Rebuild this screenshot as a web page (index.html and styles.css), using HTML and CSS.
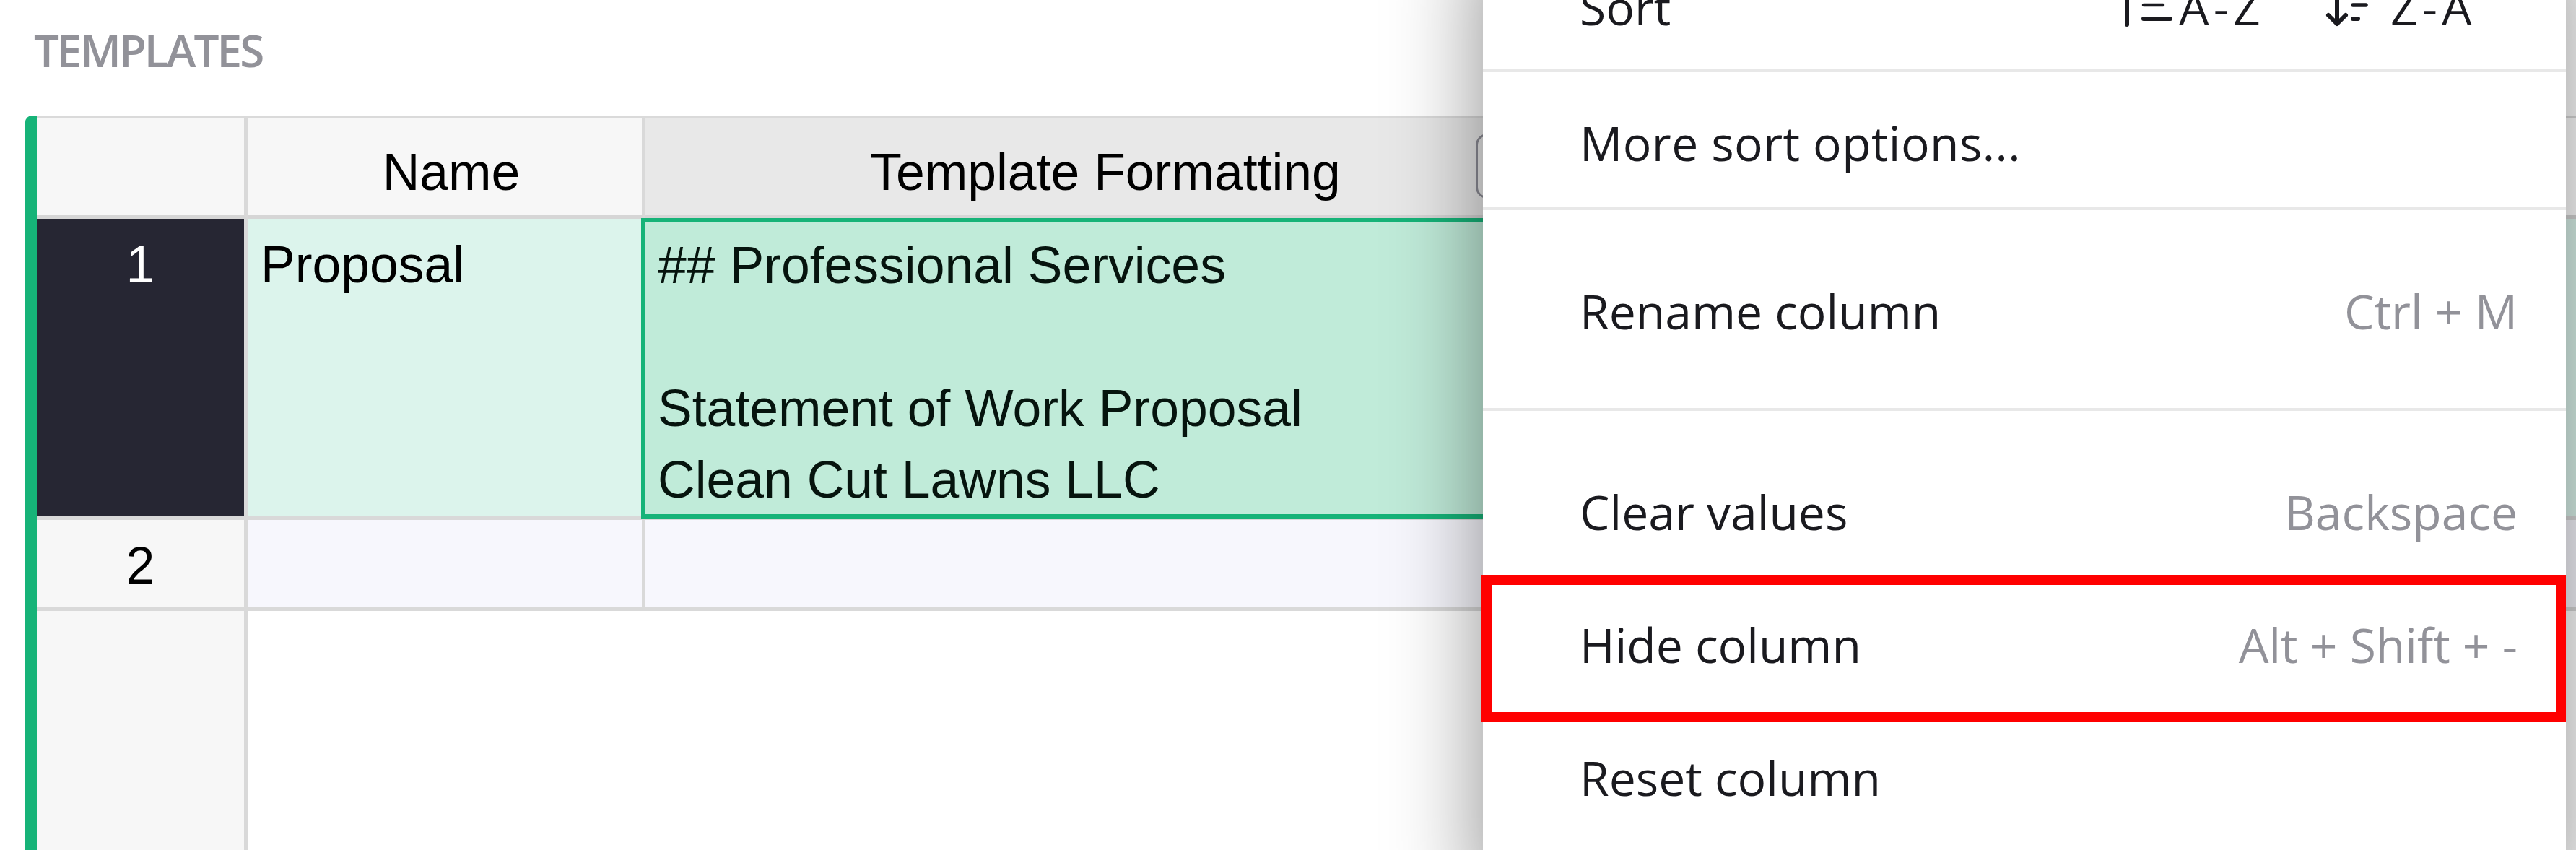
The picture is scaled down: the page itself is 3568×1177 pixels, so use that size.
FILE: index.html
```html
<!DOCTYPE html>
<html lang="en">
<head>
<meta charset="utf-8">
<title>Templates</title>
<link rel="stylesheet" href="styles.css">
</head>
<body>
<div class="page">
  <div class="section-title">TEMPLATES</div>
  <div class="section">
    <div class="active-bar"></div>
    <div class="grid">
      <div class="cell hdr rownum"></div>
      <div class="cell hdr col-name"><span class="hdr-label">Name</span></div>
      <div class="cell hdr col-tf selected-col"><span class="hdr-label">Template Formatting</span><span class="hdr-btn"><svg viewBox="0 0 20 20" width="40" height="40"><path d="M5 8l5 5 5-5" fill="none" stroke="#8d8d96" stroke-width="2"/></svg></span></div>
      <div class="cell hdr col-rest"></div>

      <div class="cell rownum active-row">1</div>
      <div class="cell col-name row-sel">Proposal</div>
      <div class="cell col-tf cursor-cell">## Professional Services

Statement of Work Proposal
Clean Cut Lawns LLC</div>
      <div class="cell col-rest row-sel"></div>

      <div class="cell rownum">2</div>
      <div class="cell col-name new-row"></div>
      <div class="cell col-tf new-row"></div>
      <div class="cell col-rest new-row"></div>

      <div class="cell rownum filler"></div>
      <div class="filler-rest"></div>
    </div>
  </div>

  <div class="menu">
    <div class="menu-item sort-item">
      <span>Sort</span>
      <span class="sort-group">
        <svg class="sort-icon asc" width="80" height="90" viewBox="0 0 80 90">
          <path d="M1 14 L11 3 L21 14" fill="none" stroke="#1a1a1f" stroke-width="6" stroke-linecap="round" stroke-linejoin="round"/>
          <line x1="11" y1="4" x2="11" y2="70" stroke="#1a1a1f" stroke-width="6" stroke-linecap="round"/>
          <line x1="34" y1="23" x2="52" y2="23" stroke="#1a1a1f" stroke-width="5" stroke-linecap="round"/>
          <line x1="34" y1="43" x2="61" y2="43" stroke="#1a1a1f" stroke-width="4.5" stroke-linecap="round"/>
          <line x1="34" y1="62" x2="71" y2="62" stroke="#1a1a1f" stroke-width="6" stroke-linecap="round"/>
        </svg>
        <span class="sort-label">A-Z</span>
        <svg class="sort-icon desc" width="66" height="90" viewBox="0 0 66 90">
          <line x1="17" y1="0" x2="17" y2="69" stroke="#1a1a1f" stroke-width="6" stroke-linecap="round"/>
          <path d="M5 57 L17 69 L29 57" fill="none" stroke="#1a1a1f" stroke-width="6" stroke-linecap="round" stroke-linejoin="round"/>
          <line x1="39" y1="24" x2="62" y2="24" stroke="#1a1a1f" stroke-width="5" stroke-linecap="round"/>
          <line x1="39" y1="43" x2="57" y2="43" stroke="#1a1a1f" stroke-width="5.5" stroke-linecap="round"/>
          <line x1="39" y1="62" x2="46" y2="62" stroke="#1a1a1f" stroke-width="6" stroke-linecap="round"/>
        </svg>
        <span class="sort-label">Z-A</span>
      </span>
    </div>
    <div class="menu-sep"></div>
    <div class="menu-item more-sort">More sort options...</div>
    <div class="menu-sep"></div>
    <div class="menu-section">
      <div class="menu-item"><span>Rename column</span><span class="shortcut">Ctrl + M</span></div>
    </div>
    <div class="menu-sep"></div>
    <div class="menu-section">
      <div class="menu-item"><span>Clear values</span><span class="shortcut">Backspace</span></div>
      <div class="menu-item"><span>Hide column</span><span class="shortcut">Alt + Shift + -</span></div>
      <div class="menu-item"><span>Reset column</span></div>
    </div>
    <div class="annotation"></div>
  </div>
</div>
</body>
</html>
```

FILE: styles.css
```css
html, body {
  margin: 0;
  padding: 0;
  height: 100%;
  overflow: hidden;
  background: #ffffff;
}

.page {
  position: relative;
  width: 3568px;
  height: 1177px;
  overflow: hidden;
  font-family: "Liberation Sans", Arial, sans-serif;
  color: #000000;
}

.section-title {
  padding: 29px 0 0 47px;
  height: 80px;
  font-family: "Open Sans", "Noto Sans", sans-serif;
  font-weight: 600;
  font-size: 62px;
  line-height: 80px;
  letter-spacing: -3px;
  color: #929299;
}

.section {
  display: flex;
  margin-top: 51px;
  padding-left: 35px;
  height: 1017px;
}

.active-bar {
  width: 16px;
  flex: none;
  background: #16b378;
  border-radius: 9px 0 0 0;
}

.grid {
  flex: 1;
  display: grid;
  grid-template-columns: 292px 550px 1262px 1fr;
  grid-template-rows: 139px 417px 126px 1fr;
  border-top: 4px solid #dadada;
}

.cell {
  box-sizing: border-box;
  font-size: 71.5px;
  line-height: 99px;
  border-bottom: 5px solid #d9d9d9;
  white-space: pre-wrap;
  overflow: hidden;
}

.hdr {
  display: flex;
  align-items: center;
  justify-content: center;
  padding: 6px 0 0 0;
  white-space: nowrap;
  background: #f7f7f7;
  border-bottom-color: #d6d6d6;
}

.hdr-label {
  display: block;
}

.hdr.selected-col {
  background: #e8e8e8;
  position: relative;
  overflow: visible;
}

.hdr.col-rest {
  background: #ffffff;
}

.hdr-btn {
  position: absolute;
  left: 1151px;
  top: 21px;
  width: 90px;
  height: 90px;
  box-sizing: border-box;
  border: 3px solid #8d8d96;
  border-radius: 16px;
  display: flex;
  align-items: center;
  justify-content: center;
}

.rownum {
  border-right: 5px solid #d9d9d9;
  background: #f7f7f7;
  text-align: center;
  padding-top: 14px;
}

.rownum.active-row {
  background: #262633;
  color: #ffffff;
}

.rownum.filler {
  border-bottom: none;
}

.col-name {
  border-right: 4px solid #d9d9d9;
  padding: 14px 0 0 18px;
}

.col-tf {
  border-right: 4px solid #d9d9d9;
  padding: 15px 0 0 18px;
}

.row-sel {
  background: #dcf4ec;
}

.new-row {
  background: #f7f7fd;
}

.cursor-cell {
  position: relative;
  overflow: visible;
  background: #c0ebd9;
  color: #06140e;
}

.cursor-cell::after {
  content: "";
  position: absolute;
  top: -1px;
  left: -5px;
  right: -4px;
  bottom: -3px;
  border: 6px solid #16b378;
  pointer-events: none;
}

.filler-rest {
  grid-column: 2 / 5;
  background: #ffffff;
}

/* Column menu */
.menu {
  position: absolute;
  left: 2054px;
  top: -83px;
  width: 1500px;
  background: #ffffff;
  box-shadow: 0 0 120px rgba(0, 0, 0, 0.45);
  font-family: "Open Sans", "Noto Sans", sans-serif;
  font-size: 66px;
  color: #1a1a1f;
  padding-bottom: 47px;
}

.menu-item {
  box-sizing: border-box;
  height: 184px;
  display: flex;
  align-items: center;
  padding: 0 67px 0 134px;
  white-space: nowrap;
}

.sort-item {
  height: 179px;
  padding-top: 5px;
}

.more-sort {
  height: 187px;
  padding-top: 6px;
  letter-spacing: 0.4px;
}

.menu-sep {
  height: 4px;
  background: #e8e8e8;
}

.menu-section {
  padding: 47px 0 43px;
}

.menu-section:last-of-type {
  padding-bottom: 0;
}

.shortcut {
  margin-left: auto;
  color: #929299;
}

.sort-group {
  margin-left: auto;
  margin-right: 58px;
  display: flex;
  align-items: center;
}

.sort-icon {
  display: block;
  flex: none;
}

.sort-icon.asc {
  margin-right: 3px;
}

.sort-icon.desc {
  margin-left: 84px;
  margin-right: 25px;
}

.sort-label {
  width: 118px;
  letter-spacing: 6px;
}

.annotation {
  position: absolute;
  top: 879px;
  left: -2px;
  width: 1502px;
  height: 204px;
  box-sizing: border-box;
  border: 14px solid #ff0000;
  pointer-events: none;
}
```
